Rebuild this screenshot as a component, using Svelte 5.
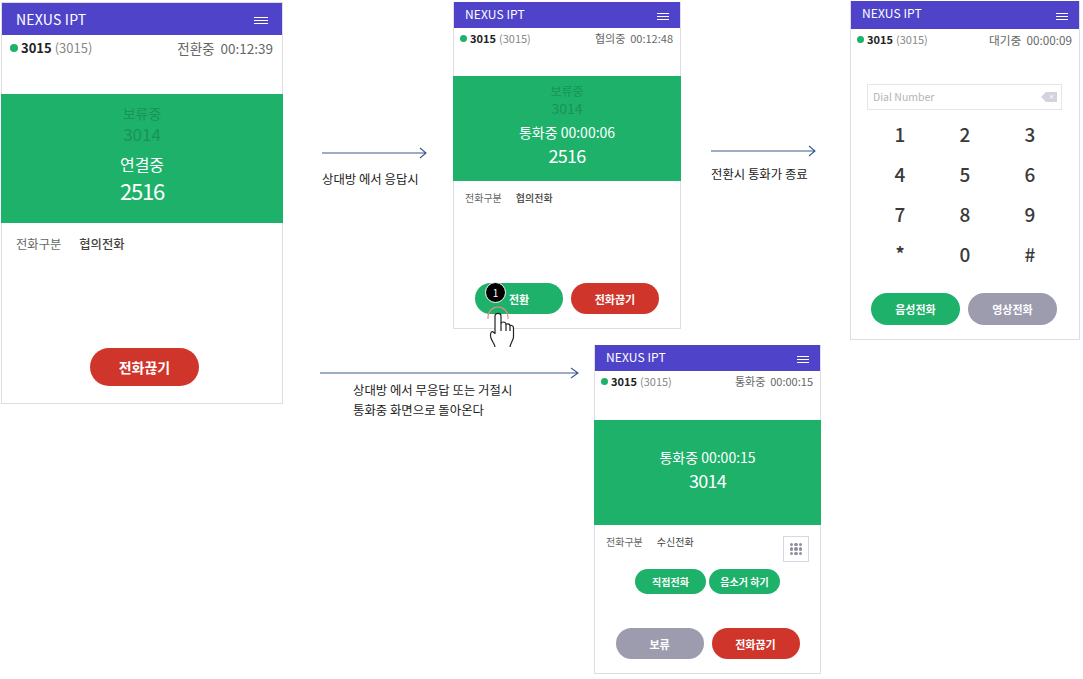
<script>
  const keys = ['1', '2', '3', '4', '5', '6', '7', '8', '9', '*', '0', '#'];
</script>

{#snippet header()}
  <div class="head">
    <span class="brand">NEXUS IPT</span>
    <span class="menu"><i></i><i></i><i></i></span>
  </div>
{/snippet}

{#snippet status(state, time)}
  <div class="status">
    <span class="me"><span class="dot"></span><b>3015</b> <em>(3015)</em></span>
    <span class="state">{state}&nbsp; {time}</span>
  </div>
{/snippet}

<div class="canvas">
  <!-- 연결중 -->
  <section class="phone p1">
    {@render header()}
    {@render status('전환중', '00:12:39')}
    <div class="call">
      <div class="held">보류중</div>
      <div class="held num">3014</div>
      <div class="label">연결중</div>
      <div class="number">2516</div>
    </div>
    <div class="info"><span>전화구분</span><strong>협의전화</strong></div>
    <div class="actions"><button class="btn red">전화끊기</button></div>
  </section>

  <!-- 협의중 -->
  <section class="phone p2">
    {@render header()}
    {@render status('협의중', '00:12:48')}
    <div class="call">
      <div class="held">보류중</div>
      <div class="held num">3014</div>
      <div class="label">통화중 00:00:06</div>
      <div class="number">2516</div>
    </div>
    <div class="info"><span>전화구분</span><strong>협의전화</strong></div>
    <div class="actions">
      <button class="btn green">전환</button>
      <button class="btn red">전화끊기</button>
    </div>
    <div class="badge">1</div>
    <svg class="hand" width="30" height="46" viewBox="0 0 30 46" fill="none">
      <path d="M-1 12 V10 A10 10 0 0 1 19 10 V12" stroke="#ef8a8a" stroke-width="1.2" />
      <path
        d="M6 40 C6 37 1.5 33 1.5 29 C1.5 26 2.5 24.5 3.5 24.5 L6 26.5 L6 9 C6 5.5 12 5.5 12 9 L12 17 C12 17 12 15 14.5 15 C17 15 17 17 17 18 C17 16.5 21 16 21 19 C21 18 24.5 18 24.5 21 L24.5 30 C24.5 33 21 37 21 40 M12 17 L12 24 M17 18 L17 24 M21 19 L21 24"
        stroke="#222" stroke-width="1.2" fill="#fff" stroke-linejoin="round" />
    </svg>
  </section>

  <!-- 대기중 -->
  <section class="phone p3">
    {@render header()}
    {@render status('대기중', '00:00:09')}
    <div class="dial">
      <span>Dial Number</span>
      <svg width="16" height="10" viewBox="0 0 16 10">
        <path d="M5 0H16V10H5L0 5Z" fill="#d3d3de" />
        <path d="M9 3.2l3 3.2M12 3.2l-3 3.2" stroke="#fff" stroke-width="0.9" />
      </svg>
    </div>
    <div class="pad">
      {#each keys as k}
        <div class="key" class:star={k === '*'}>{k}</div>
      {/each}
    </div>
    <div class="actions">
      <button class="btn green">음성전화</button>
      <button class="btn gray">영상전화</button>
    </div>
  </section>

  <!-- 통화중 -->
  <section class="phone p4">
    {@render header()}
    {@render status('통화중', '00:00:15')}
    <div class="call">
      <div class="label">통화중 00:00:15</div>
      <div class="number">3014</div>
    </div>
    <div class="info">
      <span>전화구분</span><strong class="plain">수신전화</strong>
      <div class="grid-btn">
        {#each Array(9) as _}<i></i>{/each}
      </div>
    </div>
    <div class="small-row">
      <button class="pill">직접전화</button>
      <button class="pill">음소거 하기</button>
    </div>
    <div class="actions">
      <button class="btn gray">보류</button>
      <button class="btn red">전화끊기</button>
    </div>
  </section>

  <!-- 화살표 -->
  <svg class="arrow a1" width="106" height="12" viewBox="0 0 106 12" fill="none">
    <path d="M0 6H104M98 1l6 5-6 5" stroke="#3b5b8f" stroke-width="1.1" />
  </svg>
  <p class="note n1">상대방 에서 응답시</p>

  <svg class="arrow a2" width="106" height="12" viewBox="0 0 106 12" fill="none">
    <path d="M0 6H104M98 1l6 5-6 5" stroke="#3b5b8f" stroke-width="1.1" />
  </svg>
  <p class="note n2">전환시 통화가 종료</p>

  <svg class="arrow a3" width="260" height="12" viewBox="0 0 260 12" fill="none">
    <path d="M0 6H258M251 1l7 5-7 5" stroke="#3b5b8f" stroke-width="1.1" />
  </svg>
  <p class="note n3">상대방 에서 무응답 또는 거절시<br />통화중 화면으로 돌아온다</p>
</div>

<style>
  :global(body) {
    background: #fff;
  }

  .canvas {
    position: relative;
    width: 1083px;
    height: 679px;
    overflow: hidden;
    font-family: "Noto Sans CJK KR", "Noto Sans", sans-serif;
    color: #333;
  }

  .phone {
    position: absolute;
    box-sizing: border-box;
    display: flex;
    flex-direction: column;
    border: 1px solid #dedee2;
    border-top: 0;
    background: #fff;
    --head: 26px;
    --status: 48px;
    --call: 105px;
  }

  .p1 { left: 1px; top: 2px; width: 282px; height: 402px; border-top: 1px solid #dedee2; --head: 32px; --status: 59px; --call: 129px; }
  .p2 { left: 453px; top: 2px; width: 228px; height: 327px; }
  .p3 { left: 850px; top: 1px; width: 230px; height: 339px; --head: 28px; }
  .p4 { left: 594px; top: 345px; width: 227px; height: 329px; --status: 49px; }

  .head {
    flex: none;
    height: var(--head);
    box-sizing: border-box;
    display: flex;
    align-items: center;
    justify-content: space-between;
    padding: 0 11px 4px 11px;
    background: #4f44c9;
    color: #fff;
  }

  .p1 .head { padding-bottom: 1px; }
  .p3 .head { padding-bottom: 5px; }

  .brand {
    font-size: 12px;
    letter-spacing: 0.1px;
  }

  .p1 .brand { font-size: 14px; margin-left: 3px; letter-spacing: 0.2px; }

  .menu {
    display: flex;
    flex-direction: column;
    gap: 2px;
    width: 12px;
    margin-top: 6px;
  }

  .p1 .menu { width: 14px; margin-right: 3px; margin-top: 3px; }
  .p3 .menu { margin-top: 7px; }

  .menu i {
    display: block;
    height: 1px;
    background: #fff;
  }

  .status {
    flex: none;
    height: var(--status);
    box-sizing: border-box;
    display: flex;
    justify-content: space-between;
    padding: 1px 7px 0 6px;
    font-size: 11px;
    line-height: 19px;
    color: #666;
  }

  .p1 .status { font-size: 13.5px; line-height: 24px; padding: 1px 9px 0 8px; }
  .p3 .state { font-size: 11.7px; }

  .me {
    display: flex;
    align-items: center;
    gap: 3px;
    height: 19px;
  }

  .p1 .me { height: 24px; font-size: 13px; }

  .dot {
    width: 7px;
    height: 7px;
    border-radius: 50%;
    background: #1cb26a;
  }

  .p1 .dot { width: 8px; height: 8px; }

  .me b {
    color: #222;
    font-weight: 700;
  }

  .me em {
    font-style: normal;
    color: #888;
  }

  .call {
    flex: none;
    height: var(--call);
    box-sizing: border-box;
    display: flex;
    flex-direction: column;
    align-items: center;
    justify-content: center;
    padding-bottom: 7px;
    background: #1eb16a;
    color: #fff;
    margin: 0 -1px;
  }

  .p1 .call { padding-bottom: 10px; }
  .p2 .call { padding-bottom: 8px; }

  .held {
    color: #18935a;
    font-size: 12px;
    line-height: 17px;
  }

  .held.num { font-size: 14px; line-height: 19px; margin-bottom: 2px; }
  .p2 .held.num { margin-bottom: 3px; }
  .p1 .held { font-size: 14px; line-height: 20px; }
  .p1 .held.num { font-size: 17px; line-height: 21px; margin-bottom: 9px; }

  .label {
    font-size: 14px;
    line-height: 22px;
  }

  .p1 .label { font-size: 16px; line-height: 23px; }

  .number {
    font-size: 18px;
    line-height: 24px;
    letter-spacing: -0.7px;
  }

  .p1 .number { font-size: 22px; line-height: 28px; letter-spacing: -1.2px; }

  .info {
    flex: none;
    position: relative;
    display: flex;
    gap: 14px;
    padding: 8px 11px 0;
    font-size: 10px;
    line-height: 18px;
    color: #666;
  }

  .p1 .info { font-size: 12.3px; line-height: 20px; gap: 18px; padding: 11px 14px 0; }

  .info strong {
    color: #444;
    font-weight: 500;
  }

  .info strong.plain { font-weight: 400; }

  .actions {
    margin-top: auto;
    display: flex;
    justify-content: center;
    gap: 8px;
    padding-bottom: 14px;
  }

  .p1 .actions { padding: 0 0 17px 5px; }
  .p3 .actions { padding: 0 2px 14px 0; margin-top: 20px; }

  .btn {
    width: 88px;
    height: 31px;
    border: 0;
    border-radius: 16px;
    color: #fff;
    font-family: inherit;
    font-size: 11px;
    font-weight: 700;
    padding: 0;
  }

  .p1 .btn { width: 109px; height: 38px; border-radius: 19px; font-size: 14px; }
  .p3 .btn { width: 89px; height: 32px; }

  .green { background: #1eb16a; }
  .red { background: #d0352c; }
  .gray { background: #9c9cae; }

  .badge {
    position: absolute;
    left: 31px;
    top: 280px;
    width: 21px;
    height: 21px;
    box-sizing: border-box;
    border: 1px solid #fff;
    border-radius: 50%;
    background: #000;
    color: #fff;
    font-size: 10px;
    line-height: 19px;
    text-align: center;
  }

  .hand {
    position: absolute;
    left: 35px;
    top: 305px;
    overflow: visible;
  }

  .dial {
    flex: none;
    box-sizing: border-box;
    display: flex;
    align-items: center;
    justify-content: space-between;
    width: 195px;
    height: 26px;
    margin: 7px 0 0 16px;
    padding: 0 4px 1px 5px;
    border: 1px solid #e6e6ea;
    font-size: 10.5px;
    color: #b5b5b5;
  }

  .pad {
    display: grid;
    grid-template-columns: repeat(3, 65px);
    grid-auto-rows: 40px;
    justify-content: center;
    margin-top: 3px;
  }

  .key {
    display: flex;
    align-items: center;
    justify-content: center;
    font-size: 19px;
    font-weight: 500;
    color: #3a3a3a;
  }

  .key.star { font-size: 18px; font-weight: 700; }

  .grid-btn {
    position: absolute;
    right: 11px;
    top: 11px;
    box-sizing: border-box;
    width: 26px;
    height: 26px;
    border: 1px solid #d6d6e4;
    display: grid;
    grid-template-columns: repeat(3, 3.5px);
    grid-auto-rows: 3.5px;
    gap: 1.2px;
    align-content: center;
    justify-content: center;
  }

  .grid-btn i {
    background: #8f8f9f;
    border-radius: 50%;
  }

  .small-row {
    display: flex;
    justify-content: center;
    gap: 3px;
    margin-top: 18px;
  }

  .pill {
    width: 71px;
    height: 25px;
    border: 0;
    border-radius: 13px;
    background: #1eb16a;
    color: #fff;
    font-family: inherit;
    font-size: 10px;
    font-weight: 700;
    padding: 0;
  }

  .arrow {
    position: absolute;
  }

  .a1 { left: 322px; top: 147px; }
  .a2 { left: 711px; top: 145px; }
  .a3 { left: 320px; top: 367px; }

  .note {
    position: absolute;
    margin: 0;
    font-size: 12.4px;
    line-height: 20px;
    color: #222;
  }

  .n1 { left: 322px; top: 169px; }
  .n2 { left: 711px; top: 164px; }
  .n3 { left: 353px; top: 380px; }
</style>
